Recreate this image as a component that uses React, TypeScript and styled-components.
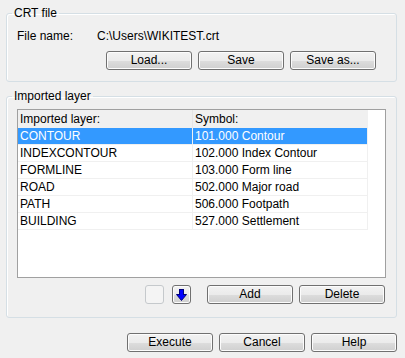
import { createGlobalStyle, styled } from "styled-components";

const rows = [
  { layer: "CONTOUR", symbol: "101.000 Contour" },
  { layer: "INDEXCONTOUR", symbol: "102.000 Index Contour" },
  { layer: "FORMLINE", symbol: "103.000 Form line" },
  { layer: "ROAD", symbol: "502.000 Major road" },
  { layer: "PATH", symbol: "506.000 Footpath" },
  { layer: "BUILDING", symbol: "527.000 Settlement" },
];

const GlobalStyle = createGlobalStyle`
  html, body {
    margin: 0;
    background: #f0f0f0;
  }
  body {
    font-family: "Liberation Sans", Arial, sans-serif;
    font-size: 12px;
    color: #000;
  }
`;

export default function App() {
  return (
    <>
      <GlobalStyle />
      <Dialog>
        <Group $top={7}>
          <Legend>CRT file</Legend>
          <FileRow>
            <span>File name:</span>
            <span>C:\Users\WIKITEST.crt</span>
          </FileRow>
          <ButtonRow $pad={20} $top={8} $bottom={11}>
            <Button>Load...</Button>
            <Button>Save</Button>
            <Button>Save as...</Button>
          </ButtonRow>
        </Group>

        <Group $top={8}>
          <Legend>Imported layer</Legend>
          <ListView>
            <HeaderRow>
              <HeaderCell>Imported layer:</HeaderCell>
              <HeaderCell>Symbol:</HeaderCell>
            </HeaderRow>
            {rows.map((r, i) => (
              <Row key={r.layer} $selected={i === 0}>
                <Cell>{r.layer}</Cell>
                <Cell>{r.symbol}</Cell>
              </Row>
            ))}
          </ListView>
          <ButtonRow $pad={11} $top={7} $bottom={13}>
            <IconButton disabled />
            <IconButton $gapRight={16}>
              <svg width="11" height="12" viewBox="0 0 11 12">
                <rect x="3.5" y="0.5" width="4" height="5" fill="#0000ff" stroke="#00007a" strokeWidth="1" />
                <polygon points="0.5,5.5 10.5,5.5 5.5,11.5" fill="#0000ff" stroke="#00007a" strokeWidth="1" strokeLinejoin="round" />
                <rect x="4" y="5" width="3" height="1.5" fill="#0000ff" />
              </svg>
            </IconButton>
            <Button>Add</Button>
            <Button>Delete</Button>
          </ButtonRow>
        </Group>

        <ButtonRow $pad={0} $top={15} $bottom={0}>
          <Button>Execute</Button>
          <Button>Cancel</Button>
          <Button>Help</Button>
        </ButtonRow>
      </Dialog>
    </>
  );
}

const Dialog = styled.div`
  width: 405px;
  height: 358px;
  box-sizing: border-box;
  padding: 0 8px 0 6px;
  display: flex;
  flex-direction: column;
`;

const Group = styled.fieldset<{ $top: number }>`
  margin: ${(p) => p.$top}px 0 0 0;
  padding: 0;
  border: 1px solid #d5dfe5;
  border-radius: 3px;
  box-shadow: inset 1px 1px 0 #fff;
  min-width: 0;
`;

const Legend = styled.legend`
  margin-left: 5px;
  padding: 0 2px;
  line-height: 13px;
`;

const FileRow = styled.div`
  display: grid;
  grid-template-columns: 80px auto;
  margin: 10px 0 0 10px;
  line-height: 13px;
`;

const ButtonRow = styled.div<{ $pad: number; $top: number; $bottom: number }>`
  display: flex;
  justify-content: flex-end;
  gap: 6px;
  padding: 0 ${(p) => p.$pad}px 0 0;
  margin: ${(p) => p.$top}px 0 ${(p) => p.$bottom}px 0;
`;

const Button = styled.button`
  width: 86px;
  height: 19px;
  padding: 0;
  font: inherit;
  line-height: 15px;
  color: #000;
  border: 1px solid #707070;
  border-radius: 3px;
  background: linear-gradient(#f2f2f2 0%, #ebebeb 50%, #dddddd 51%, #cfcfcf 100%);
  box-shadow: inset 0 0 0 1px #fcfcfc;
`;

const IconButton = styled.button<{ $gapRight?: number }>`
  width: 19px;
  height: 19px;
  padding: 0;
  margin-right: ${(p) => (p.$gapRight ?? 8) - 6}px;
  display: flex;
  align-items: center;
  justify-content: center;
  border: 1px solid #707070;
  border-radius: 3px;
  background: linear-gradient(#f2f2f2 0%, #ebebeb 50%, #dddddd 51%, #cfcfcf 100%);
  box-shadow: inset 0 0 0 1px #fcfcfc;

  &:disabled {
    border-color: #c5c9cc;
    background: #f4f4f4;
    box-shadow: none;
  }
`;

const ListView = styled.div`
  margin: 6px 10px 0 10px;
  height: 169px;
  box-sizing: border-box;
  border: 1px solid #a0a0a0;
  background: #fff;
  overflow: hidden;
`;

const HeaderRow = styled.div`
  display: grid;
  grid-template-columns: 175px 175px;
  width: 350px;
  height: 18px;
  line-height: 18px;
`;

const HeaderCell = styled.div`
  background: #f0f0f0;
  padding-left: 2px;
  border-right: 1px solid #e5e5e5;
  &:last-child {
    border-right: none;
  }
`;

const Row = styled.div<{ $selected: boolean }>`
  display: grid;
  grid-template-columns: 175px 175px;
  width: 350px;
  height: 17px;
  background: ${(p) => (p.$selected ? "#3399ff" : "#fff")};
  color: ${(p) => (p.$selected ? "#fff" : "#000")};
`;

const Cell = styled.div`
  line-height: 16px;
  padding-left: 2px;
  border-bottom: 1px solid #f0f0f0;
  border-right: 1px solid #f0f0f0;
`;
